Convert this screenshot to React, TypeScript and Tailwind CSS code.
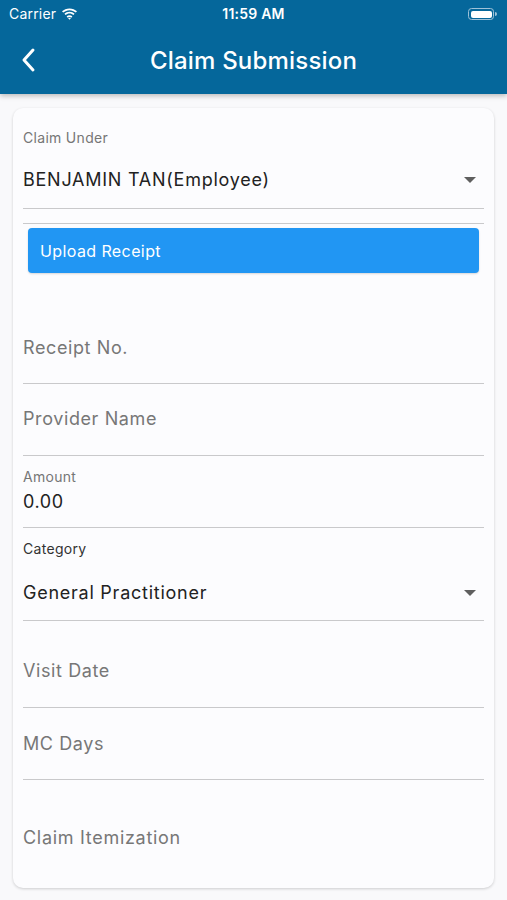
import React from "react";

function Wifi() {
  return (
    <svg width="17" height="12" viewBox="0 0 17 12" fill="white">
      <path d="M8.5 2.2c2.4 0 4.6.9 6.3 2.4l1.2-1.3C14 1.4 11.4.4 8.5.4S3 1.4 1 3.3l1.2 1.3c1.7-1.5 3.9-2.4 6.3-2.4z" />
      <path d="M8.5 5.6c1.5 0 2.9.6 3.9 1.5l1.2-1.3C12.3 4.6 10.5 3.8 8.5 3.8s-3.8.8-5.1 2l1.2 1.3c1-.9 2.4-1.5 3.9-1.5z" />
      <path d="M8.5 9c.7 0 1.3.3 1.7.7l1.2-1.3c-.8-.7-1.8-1.2-2.9-1.2s-2.1.5-2.9 1.2l1.2 1.3c.4-.4 1-.7 1.7-.7zM8.5 11.8l1.4-1.5c-.4-.3-.9-.5-1.4-.5s-1 .2-1.4.5z" />
    </svg>
  );
}

function Caret() {
  return (
    <svg width="12" height="6" viewBox="0 0 12 6" className="mr-[8px]">
      <path d="M0 0h12L6 6z" fill="#5f5f5f" />
    </svg>
  );
}

export default function App() {
  const font = { fontFamily: "Inter, 'Noto Sans', 'Liberation Sans', sans-serif" };
  return (
    <div className="w-[507px] h-[900px] bg-[#f9f9fb] overflow-hidden flex flex-col" style={font}>
      <div className="h-[94px] bg-[#05679b] shadow-[0_2px_5px_rgba(0,0,0,0.25)] flex flex-col relative z-10">
        <div className="h-[28px] flex items-center justify-between px-[9px] text-white">
          <div className="flex items-center gap-[5px] w-[120px]">
            <span className="text-[14px] leading-[16px] font-normal tracking-[0.2px]">Carrier</span>
            <Wifi />
          </div>
          <span className="text-[14px] leading-[16px] font-semibold tracking-[0.2px]">11:59 AM</span>
          <div className="w-[120px] flex justify-end pr-[1px]">
            <div className="flex items-center">
              <div className="w-[26px] h-[12px] rounded-[3.5px] border border-[#9ec2d8] p-[1.5px]">
                <div className="w-full h-full bg-white rounded-[2px]" />
              </div>
              <div className="w-[1.5px] h-[4px] bg-[#9ec2d8] rounded-r-sm ml-[1px]" />
            </div>
          </div>
        </div>
        <div className="flex-1 flex items-center relative">
          <div className="absolute left-[20px] top-[19px]">
            <svg width="16" height="26" viewBox="0 0 16 26">
              <path d="M13 3L4 13l9 10" stroke="white" strokeWidth="3" fill="none" strokeLinecap="round" strokeLinejoin="round" />
            </svg>
          </div>
          <div className="w-full text-center text-white text-[24px] leading-[30px] font-medium tracking-[0.2px] -mt-[1px]">
            Claim Submission
          </div>
        </div>
      </div>

      <div className="mx-[13px] mt-[14px] h-[780px] rounded-[10px] bg-[#fcfcfe] shadow-[0_1px_3px_rgba(0,0,0,0.18)] px-[10px] flex flex-col">
        <div className="h-[101px] border-b-[1.5px] border-[#c9c9cb] flex flex-col">
          <div className="mt-[21px] text-[14px] leading-[17px] text-[#767676] tracking-[0.3px]">Claim Under</div>
          <div className="mt-[22px] flex items-center justify-between">
            <span className="text-[18px] leading-[24px] text-[#222] tracking-[0.75px]">BENJAMIN TAN(Employee)</span>
            <Caret />
          </div>
        </div>
        <div className="h-[15px] border-b-[1.5px] border-[#c9c9cb]" />
        <div className="mt-[4px] mx-[5px] h-[45px] rounded-[4px] bg-[#2196f3] flex items-center px-[12px] text-white text-[16px] leading-[20px] tracking-[0.4px] shadow-[0_1px_2px_rgba(0,0,0,0.15)]">
          Upload Receipt
        </div>
        <div className="h-[111px] border-b-[1.5px] border-[#c9c9cb] flex flex-col justify-end pb-[23px]">
          <span className="text-[18px] leading-[24px] text-[#777] tracking-[0.6px]">Receipt No.</span>
        </div>
        <div className="h-[72px] border-b-[1.5px] border-[#c9c9cb] flex flex-col justify-end pb-[24px]">
          <span className="text-[18px] leading-[24px] text-[#777] tracking-[0.6px]">Provider Name</span>
        </div>
        <div className="h-[72px] border-b-[1.5px] border-[#c9c9cb] flex flex-col">
          <span className="mt-[12px] text-[14px] leading-[17px] text-[#767676] tracking-[0.3px]">Amount</span>
          <span className="mt-[5px] text-[18px] leading-[24px] text-[#222] tracking-[0.6px]">0.00</span>
        </div>
        <div className="h-[93px] border-b-[1.5px] border-[#c9c9cb] flex flex-col">
          <span className="mt-[12px] text-[14px] leading-[17px] text-[#333] tracking-[0.3px]">Category</span>
          <div className="mt-[24px] flex items-center justify-between">
            <span className="text-[18px] leading-[24px] text-[#222] tracking-[0.75px]">General Practitioner</span>
            <Caret />
          </div>
        </div>
        <div className="h-[87px] border-b-[1.5px] border-[#c9c9cb] flex flex-col justify-end pb-[24px]">
          <span className="text-[18px] leading-[24px] text-[#777] tracking-[0.6px]">Visit Date</span>
        </div>
        <div className="h-[72px] border-b-[1.5px] border-[#c9c9cb] flex flex-col justify-end pb-[23px]">
          <span className="text-[18px] leading-[24px] text-[#777] tracking-[0.6px]">MC Days</span>
        </div>
        <div className="mt-[46px] text-[18px] leading-[24px] text-[#777] tracking-[0.7px]">Claim Itemization</div>
      </div>
    </div>
  );
}
